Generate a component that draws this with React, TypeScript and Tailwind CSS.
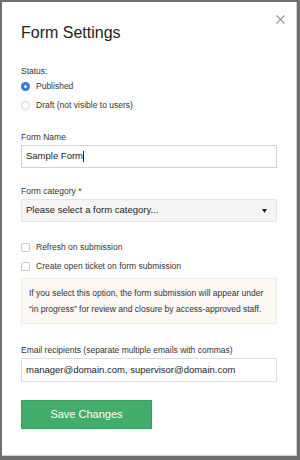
export default function App() {
  return (
    <div className="w-[300px] h-[460px] bg-[#6f6f6f] pl-[2px] pt-[2px] pr-[3px] pb-[4px] font-['Liberation_Sans',Arial,sans-serif]">
      <div className="relative h-full bg-white border-r border-b border-[#d0d0d0] px-[19px] text-[#333]">
        <button className="absolute right-[11px] top-[13px] text-[#9a9a9a]">
          <svg width="9" height="9" viewBox="0 0 9 9" stroke="currentColor" strokeWidth="1.2">
            <path d="M0.5 0.5L8.5 8.5M8.5 0.5L0.5 8.5" />
          </svg>
        </button>
        <h1 className="pt-[21px] text-[16px] leading-[20px] text-[#222]">Form Settings</h1>

        <div className="mt-[22px] text-[8.5px] leading-[12px]">Status:</div>
        <div className="mt-[3px] flex items-center gap-[6px] text-[8.5px] leading-[12px]">
          <span className="w-[9px] h-[9px] rounded-full bg-[#2f7de1] flex items-center justify-center">
            <span className="w-[3px] h-[3px] rounded-full bg-white" />
          </span>
          Published
        </div>
        <div className="mt-[7px] flex items-center gap-[6px] text-[8.5px] leading-[12px]">
          <span className="w-[9px] h-[9px] rounded-full border border-[#d2d2d2]" />
          Draft (not visible to users)
        </div>

        <div className="mt-[20px] text-[8.5px] leading-[12px]">Form Name</div>
        <div className="mt-[2px] h-[23px] border border-[#d2d2d2] flex items-center px-[4px] text-[9.5px] text-[#222]">
          Sample Form<span className="w-px h-[11px] bg-[#222]" />
        </div>

        <div className="mt-[17px] text-[8.5px] leading-[12px]">Form category *</div>
        <div className="mt-[2px] h-[23px] border border-[#e4e4e4] bg-[#f5f5f5] flex items-center justify-between pl-[4px] pr-[9px] text-[9.5px] text-[#222]">
          <span>Please select a form category...</span>
          <svg width="5" height="4" viewBox="0 0 5 4"><path d="M0 0H5L2.5 4Z" fill="#222" /></svg>
        </div>

        <div className="mt-[19px] flex items-center gap-[6px] text-[8.5px] leading-[12px]">
          <span className="w-[9px] h-[9px] rounded-[2px] border border-[#c8c8c8]" />
          Refresh on submission
        </div>
        <div className="mt-[7px] flex items-center gap-[6px] text-[8.5px] leading-[12px]">
          <span className="w-[9px] h-[9px] rounded-[2px] border border-[#c8c8c8]" />
          Create open ticket on form submission
        </div>
        <div className="mt-[6px] h-[46px] border border-[#eeeae6] bg-[#fdf8f4] px-[7px] py-[6px] text-[8.5px] leading-[16px] text-[#333]">
          If you select this option, the form submission will appear under “in progress” for review and closure by access-approved staff.
        </div>

        <div className="mt-[20px] text-[8.5px] leading-[12px]">Email recipients (separate multiple emails with commas)</div>
        <div className="mt-[2px] h-[24px] border border-[#dedede] flex items-center px-[4px] text-[9.5px] text-[#222]">
          manager@domain.com, supervisor@domain.com
        </div>

        <button className="mt-[18px] w-[131px] h-[29px] bg-[#43ad6b] border border-[#3a9d5f] text-white text-[11px]">
          Save Changes
        </button>
      </div>
    </div>
  )
}
